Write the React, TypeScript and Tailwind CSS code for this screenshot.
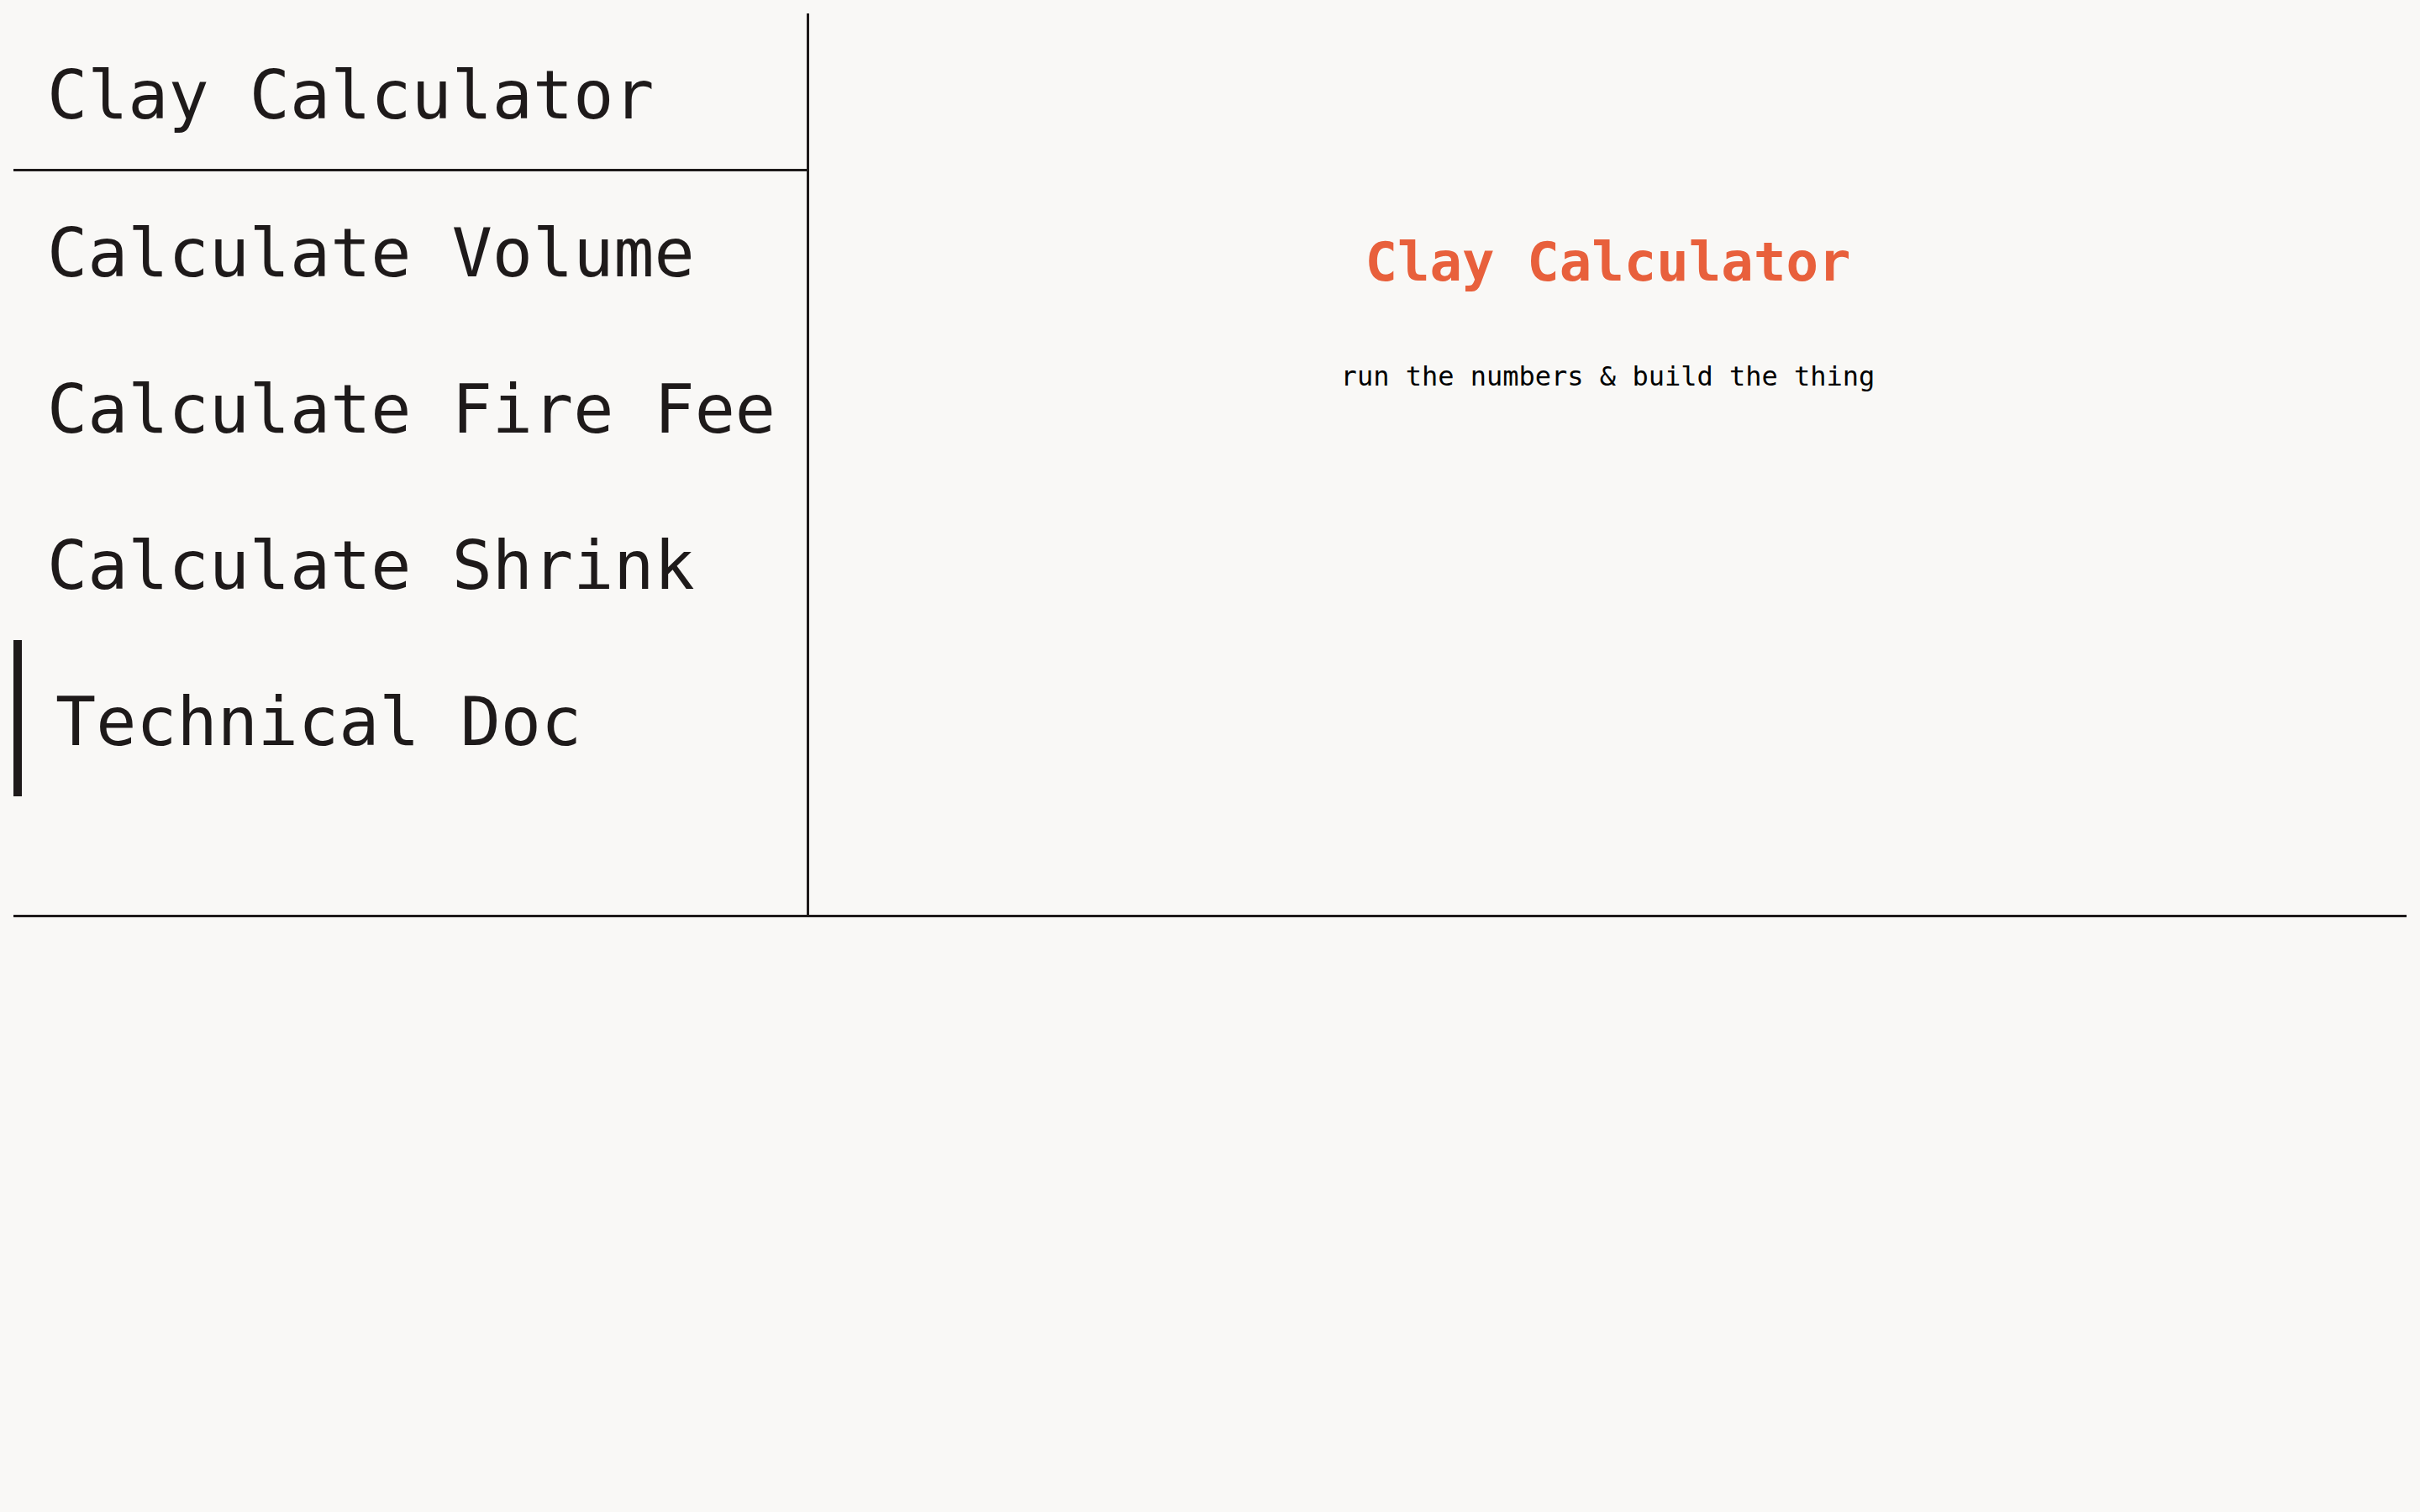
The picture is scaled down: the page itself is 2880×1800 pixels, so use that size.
import React from 'react';

const navItems = [
  { label: 'Calculate Volume', active: false },
  { label: 'Calculate Fire Fee', active: false },
  { label: 'Calculate Shrink', active: false },
  { label: 'Technical Doc', active: true },
];

const App = () => {
  return (
    <div className="min-h-screen bg-[#f9f8f6] p-4 font-['DejaVu_Sans_Mono',monospace] text-[#1e1a1a]">
      <div className="flex h-[1076px] border-b-[3px] border-[#1e1a1a]">
        {/* sidebar */}
        <nav className="flex w-[947px] shrink-0 flex-col border-r-[3px] border-[#1e1a1a]">
          <div className="border-b-[3px] border-[#1e1a1a] px-10 pt-[45px] pb-[34px] text-[80px] leading-[106px] whitespace-nowrap">
            Clay Calculator
          </div>
          {navItems.map((item) => (
            <a
              key={item.label}
              href="#"
              className={
                item.active
                  ? 'block border-l-[10px] border-[#1e1a1a] px-10 pt-[45px] pb-[35px] text-[80px] leading-[106px] whitespace-nowrap'
                  : 'block px-10 pt-[45px] pb-[35px] text-[80px] leading-[106px] whitespace-nowrap'
              }
            >
              {item.label}
            </a>
          ))}
        </nav>

        {/* main */}
        <main className="flex flex-1 flex-col items-center pt-[260px]">
          <h1 className="text-[64px] leading-[72px] font-bold text-[#e8603c]">
            Clay Calculator
          </h1>
          <p className="mt-[82px] text-[32px] leading-[36px] text-black">
            run the numbers &amp; build the thing
          </p>
        </main>
      </div>
    </div>
  );
};

export default App;
